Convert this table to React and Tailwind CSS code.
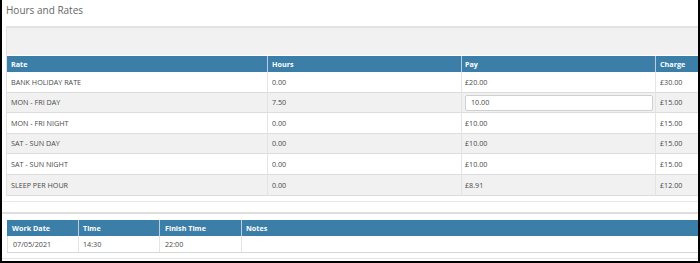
import React from "react";

const rows = [
  ["BANK HOLIDAY RATE", "0.00", "£20.00", "£30.00"],
  ["MON - FRI DAY", "7.50", null, "£15.00"],
  ["MON - FRI NIGHT", "0.00", "£10.00", "£15.00"],
  ["SAT - SUN DAY", "0.00", "£10.00", "£15.00"],
  ["SAT - SUN NIGHT", "0.00", "£10.00", "£15.00"],
  ["SLEEP PER HOUR", "0.00", "£8.91", "£12.00"],
];
const heights = ["h-[21px]", "h-[20px]", "h-[21px]", "h-[20px]", "h-[21px]", "h-[21px]"];

export default function App() {
  return (
    <div
      className="w-[700px] h-[263px] overflow-hidden bg-white border-l-2 border-r-2 border-b-2 border-black flex flex-col"
      style={{ fontFamily: '"Open Sans", "Noto Sans", sans-serif' }}
    >
      <div className="h-[26px] pl-[4px] pt-[3px] text-[10px] leading-[14px] text-[#666] shrink-0">
        Hours and Rates
      </div>
      <div className="ml-[4px] border-t-2 border-l border-[#e2e2e2] shrink-0">
        <div className="h-[27px] bg-[#f1f1f1]"></div>
        <div className="h-[1px] bg-white"></div>
        <div className="grid grid-cols-[260px_194px_194px_80px] w-[728px] text-[7.2px]">
          <div className="h-[16px] bg-[#3b7ea8] text-white font-bold flex items-center pl-[4px]">Rate</div>
          <div className="h-[16px] bg-[#3b7ea8] text-white font-bold flex items-center pl-[4px] border-l border-[#b9cfdf]">Hours</div>
          <div className="h-[16px] bg-[#3b7ea8] text-white font-bold flex items-center pl-[3px] border-l border-[#b9cfdf]">Pay</div>
          <div className="h-[16px] bg-[#3b7ea8] text-white font-bold flex items-center pl-[4px] border-l border-[#b9cfdf]">Charge</div>
          {rows.map((r, i) => {
            const bg = i % 2 === 1 ? "bg-[#f1f1f1]" : "bg-white";
            const base = `${heights[i]} ${bg} border-b border-[#dcdcdc] flex items-center text-[#4a4a4a]`;
            return (
              <React.Fragment key={i}>
                <div className={`${base} pl-[4px]`}>{r[0]}</div>
                <div className={`${base} pl-[4px] border-l border-l-[#e4e4e4]`}>{r[1]}</div>
                <div className={`${base} pl-[3px] pr-[2px] border-l border-l-[#e4e4e4]`}>
                  {r[2] === null ? (
                    <div className="w-[190px] h-[16px] bg-white border border-[#cfcfcf] rounded-[2px] flex items-center pl-[5px] text-[#4a4a4a]">
                      10.00
                    </div>
                  ) : (
                    r[2]
                  )}
                </div>
                <div className={`${base} pl-[4px] border-l border-l-[#e4e4e4]`}>{r[3]}</div>
              </React.Fragment>
            );
          })}
        </div>
      </div>
      <div className="h-[5px] shrink-0"></div>
      <div className="h-[1px] bg-[#e8e8e8] shrink-0"></div>
      <div className="h-[10px] shrink-0"></div>
      <div className="h-[2px] bg-[#dedede] shrink-0"></div>
      <div className="h-[6px] shrink-0"></div>
      <div className="ml-[5px] shrink-0">
        <div className="grid grid-cols-[71px_81px_82px_500px] w-[734px] text-[7.2px] border-b border-[#d6d6d6]">
          <div className="h-[16px] bg-[#3b7ea8] text-white font-bold flex items-center pl-[5px]">Work Date</div>
          <div className="h-[16px] bg-[#3b7ea8] text-white font-bold flex items-center pl-[4px] border-l border-[#b9cfdf]">Time</div>
          <div className="h-[16px] bg-[#3b7ea8] text-white font-bold flex items-center pl-[5px] border-l border-[#b9cfdf]">Finish Time</div>
          <div className="h-[16px] bg-[#3b7ea8] text-white font-bold flex items-center pl-[4px] border-l border-[#b9cfdf]">Notes</div>
          <div className="h-[16px] flex items-center pl-[5px] text-[#4a4a4a] border-l border-[#e0e0e0]">07/05/2021</div>
          <div className="h-[16px] flex items-center pl-[4px] text-[#4a4a4a] border-l border-[#e4e4e4]">14:30</div>
          <div className="h-[16px] flex items-center pl-[5px] text-[#4a4a4a] border-l border-[#e4e4e4]">22:00</div>
          <div className="h-[16px] flex items-center pl-[4px] text-[#4a4a4a] border-l border-[#e4e4e4]"></div>
        </div>
      </div>
      <div className="h-[5px] shrink-0"></div>
      <div className="h-[1px] bg-[#e4e4e4] shrink-0"></div>
    </div>
  );
}
